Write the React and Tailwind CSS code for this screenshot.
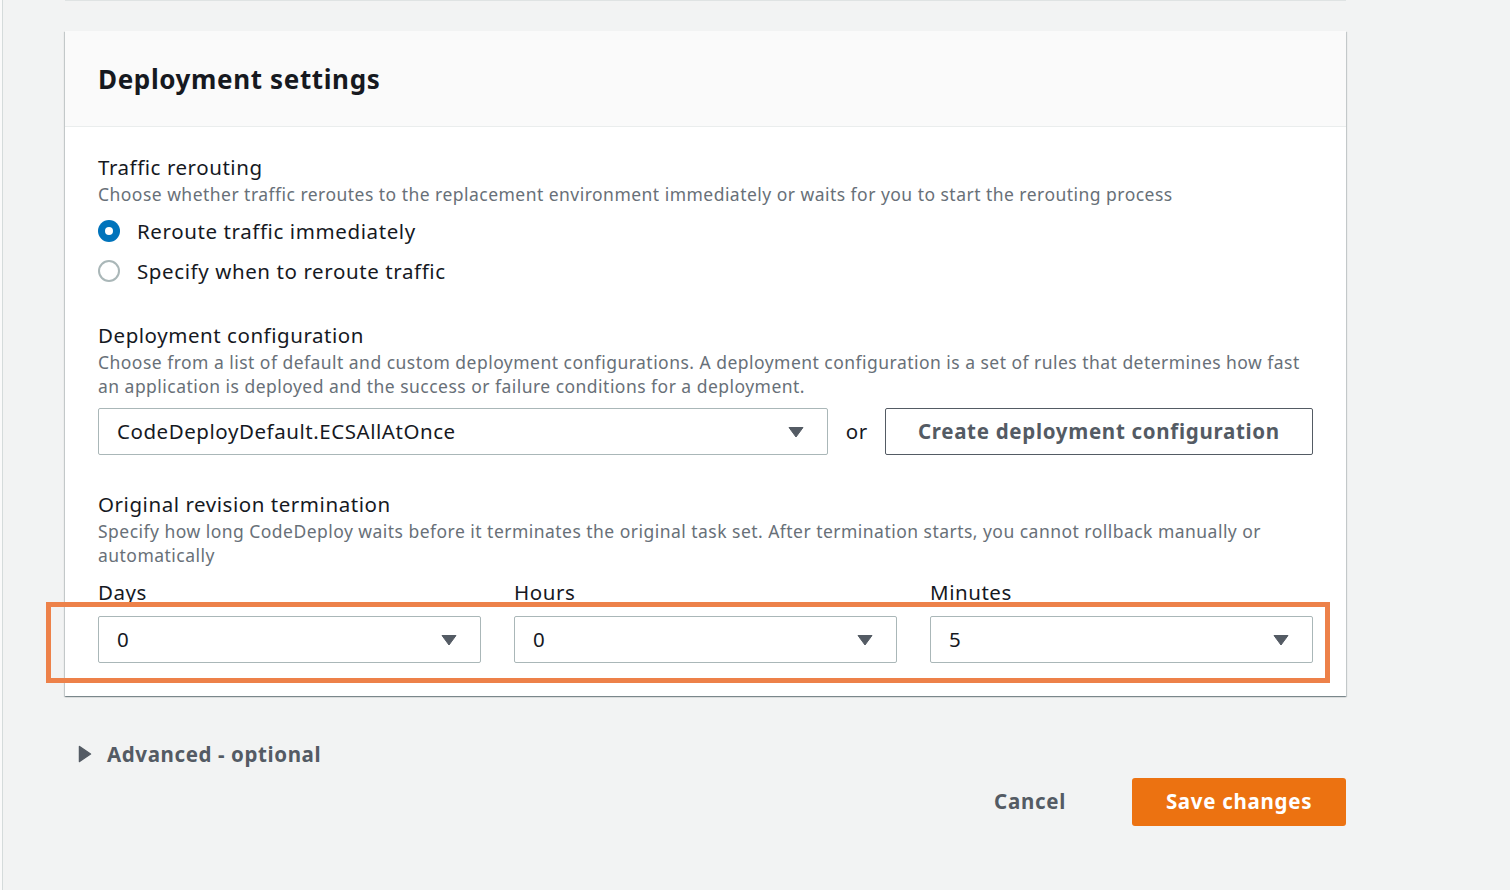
import React from "react";

const font = { fontFamily: '"Noto Sans", "Open Sans", Arial, sans-serif' };

function Caret() {
  return (
    <svg width="16" height="12" viewBox="0 0 16 12">
      <path d="M1 1.5 L15 1.5 L8 11 Z" fill="#545b64" stroke="#545b64" strokeWidth="1" strokeLinejoin="round" />
    </svg>
  );
}

function Select({ value, className = "" }) {
  return (
    <div
      className={`flex h-[47px] items-center justify-between rounded-[2px] border border-[#aab7b8] bg-white pl-[18px] pr-[23px] text-[20.5px] tracking-[0.55px] text-[#16191f] ${className}`}
    >
      <span>{value}</span>
      <Caret />
    </div>
  );
}

function Radio({ checked, label }) {
  return (
    <div className="flex h-[40px] items-center">
      {checked ? (
        <span className="flex h-[22px] w-[22px] items-center justify-center rounded-full bg-[#0073bb]">
          <span className="h-[8px] w-[8px] rounded-full bg-white" />
        </span>
      ) : (
        <span className="h-[22px] w-[22px] rounded-full border-2 border-[#aab7b8] bg-white" />
      )}
      <span className="ml-[17px] text-[20.5px] tracking-[0.6px] text-[#16191f]">{label}</span>
    </div>
  );
}

const label = "text-[20.5px] leading-[26px] tracking-[0.55px] text-[#16191f]";
const desc = "mt-[2px] text-[17.5px] leading-[24px] tracking-[0.47px] text-[#687078]";

export default function App() {
  return (
    <div style={font} className="flex min-h-[890px] w-[1510px] bg-[#f2f3f3]">
      <div className="w-[3px] border-r border-[#d5dbdb] bg-[#fafafa]" />
      <div className="ml-[62px] flex w-[1281px] flex-col">
        <div className="h-[1px] bg-[#dfe3e3]" />
        <div className="mt-[30px] bg-white shadow-[0_1px_1px_0_rgba(0,28,36,0.3),1px_1px_1px_0_rgba(0,28,36,0.15),-1px_1px_1px_0_rgba(0,28,36,0.15)]">
          <div className="flex h-[96px] items-center border-b border-[#eaeded] bg-[#fafafa] px-[33px]">
            <h2 className="text-[26px] font-bold leading-[32px] tracking-[0.63px] text-[#16191f]">Deployment settings</h2>
          </div>
          <div className="px-[33px] pb-[33px] pt-[27px]">
            <div className={label}>Traffic rerouting</div>
            <div className={desc}>
              Choose whether traffic reroutes to the replacement environment immediately or waits for you to start the rerouting process
            </div>
            <div className="mt-[5px]">
              <Radio checked label="Reroute traffic immediately" />
              <Radio label="Specify when to reroute traffic" />
            </div>

            <div className={`mt-[31px] ${label}`}>Deployment configuration</div>
            <div className={desc}>
              Choose from a list of default and custom deployment configurations. A deployment configuration is a set of rules that determines how fast an application is deployed and the success or failure conditions for a deployment.
            </div>
            <div className="mt-[10px] flex items-center">
              <Select value="CodeDeployDefault.ECSAllAtOnce" className="w-[731px]" />
              <span className="ml-[18px] mr-[17px] text-[20.5px] tracking-[0.55px] text-[#16191f]">or</span>
              <button className="flex h-[47px] w-[429px] items-center justify-center rounded-[2px] border border-[#545b64] bg-white text-[20.5px] font-bold tracking-[0.7px] text-[#545b64]">
                Create deployment configuration
              </button>
            </div>

            <div className={`mt-[36px] ${label}`}>Original revision termination</div>
            <div className={desc}>
              Specify how long CodeDeploy waits before it terminates the original task set. After termination starts, you cannot rollback manually or automatically
            </div>
            <div className="mt-[13px] grid grid-cols-3 gap-x-[33px] text-[20.5px] leading-[24px] tracking-[0.55px] text-[#16191f]">
              <div>Days</div>
              <div>Hours</div>
              <div>Minutes</div>
            </div>
            <div className="relative mt-[12px] grid grid-cols-3 gap-x-[33px]">
              <Select value="0" />
              <Select value="0" />
              <Select value="5" />
              <div className="pointer-events-none absolute bottom-[-20px] left-[-52px] right-[-17px] top-[-14px] border-[5px] border-[#ed8149]" />
            </div>
          </div>
        </div>

        <div className="mt-[43px] flex items-center">
          <svg width="14" height="18" viewBox="0 0 14 18" className="ml-[13px]">
            <path d="M1.5 1.5 L12.5 9 L1.5 16.5 Z" fill="#545b64" stroke="#545b64" strokeWidth="1.5" strokeLinejoin="round" />
          </svg>
          <span className="ml-[15px] text-[20.5px] font-bold tracking-[0.6px] text-[#545b64]">Advanced - optional</span>
        </div>

        <div className="mt-[8px] flex items-center justify-end">
          <button className="mr-[66px] text-[20.5px] font-bold tracking-[0.7px] text-[#545b64]">Cancel</button>
          <button className="flex h-[48px] w-[214px] items-center justify-center rounded-[3px] bg-[#ec7211] text-[20.5px] font-bold tracking-[0.7px] text-white">
            Save changes
          </button>
        </div>
      </div>
    </div>
  );
}
